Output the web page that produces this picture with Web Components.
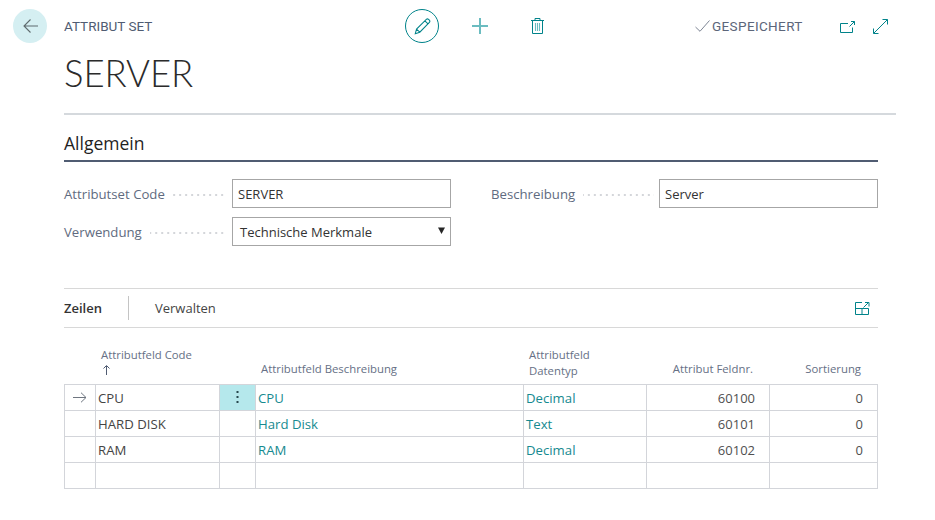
<!DOCTYPE html>
<html lang="de">
<head>
<meta charset="utf-8">
<title>Attribut Set</title>
<style>
	html, body { margin: 0; background: #fff; }
	body { font: 13px "Open Sans", "Noto Sans", sans-serif; color: #333; width: 935px; height: 520px; overflow: hidden; }
</style>
</head>
<body>
<bc-page>
	<bc-header slot="header" caption="ATTRIBUT SET" name="SERVER"></bc-header>
	<bc-section caption="Allgemein">
		<bc-field slot="left" label="Attributset Code" value="SERVER"></bc-field>
		<bc-field slot="left" label="Verwendung" value="Technische Merkmale" select></bc-field>
		<bc-field slot="right" label="Beschreibung" value="Server"></bc-field>
	</bc-section>
	<bc-lines></bc-lines>
</bc-page>

<script>
const teal = "#00838a";

/**
 * Page frame, keeps the vertical rhythm of the card.
 */
class BcPage extends HTMLElement {
	constructor () {
		super();
		this.attachShadow({mode: "open"}).innerHTML = `
			<style>
				:host { display: flex; flex-direction: column; }
				.body { padding: 0 57px 0 64px; display: flex; flex-direction: column; }
			</style>
			<slot name="header"></slot>
			<div class="body"><slot></slot></div>
		`;
	}
}

/**
 * Top bar with back button, actions and the record title.
 */
class BcHeader extends HTMLElement {
	constructor () {
		super();
		const caption = this.getAttribute("caption");
		const name = this.getAttribute("name");
		this.attachShadow({mode: "open"}).innerHTML = `
			<style>
				:host { display: block; padding: 9px 39px 0 13px; }
				.bar { display: flex; align-items: center; height: 34px; }
				.back { width: 34px; height: 34px; border-radius: 50%; background: #d5eff2; display: flex; align-items: center; justify-content: center; flex: none; margin-right: 17px; }
				.caption { width: 341px; flex: none; font: 400 13.5px Roboto, sans-serif; color: #505c72; }
				.edit { border: 1.2px solid ${teal}; border-radius: 50%; display: flex; align-items: center; justify-content: center; flex: none; box-sizing: border-box; width: 34px; height: 34px; }
				.plus { margin-left: 33px; display: flex; }
				.trash { margin-left: 43px; display: flex; }
				.saved { margin-left: 151px; display: flex; align-items: center; gap: 2px; font: 400 13.5px Roboto, sans-serif; color: #5c667a; letter-spacing: .37px; }
				.open { margin-left: auto; display: flex; margin-top: 2px; }
				.full { margin-left: 18px; margin-right: 8px; display: flex; }
				h1 { margin: 6px 0 0 51px; font: 300 36.5px/48px Lato, sans-serif; color: #2b2b2b; letter-spacing: -.1px; }
				.rule { height: 2px; background: #d5d9dd; margin: 16px 0 0 51px; }
				svg { display: block; }
			</style>
			<div class="bar">
				<div class="back">
					<svg width="15" height="14" viewBox="0 0 15 14" fill="none" stroke="#5f6b6e" stroke-width="1.1"><path d="M15 7H1M7.500 .5 1 7l6.500 6.500"/></svg>
				</div>
				<div class="caption">${caption}</div>
				<div class="edit">
					<svg width="17" height="17" viewBox="0 0 20 20" fill="none" stroke="${teal}" stroke-width="1.2"><path d="M1.5 18.5 3 13 14.5 1.6c.8-.7 1.8-.7 2.6 0l1 1c.7.8.7 1.8 0 2.5L6.800 16.700zM3 13l3.800 3.700M12.800 3.300l3.700 3.700"/></svg>
				</div>
				<div class="plus">
					<svg width="16" height="16" viewBox="0 0 16 16" stroke="#6bbcc0" stroke-width="2"><path d="M8 0v16M0 8h16"/></svg>
				</div>
				<div class="trash">
					<svg width="13" height="16" viewBox="0 0 13 16" fill="none" stroke="${teal}" stroke-width="1"><path d="M0 2.500h13M1.500 2.500v13h10v-13M4 2.500V.5h5v2"/><path stroke="#6bbcc0" stroke-width="1.100" d="M4.500 5v8M6.500 5v8M8.500 5v8"/></svg>
				</div>
				<div class="saved">
					<svg width="15" height="12" viewBox="0 0 15 12" fill="none" stroke="#7d8594" stroke-width="1"><path d="M.5 7 5 11.300 14.500 .5"/></svg>
					<span>GESPEICHERT</span>
				</div>
				<div class="open">
					<svg width="15" height="12" viewBox="0 0 15 12" fill="none" stroke="${teal}" stroke-width="1"><path d="M8 2.500H.5v9h12V6.500M9.500 5.500l5-5M11 .5h3.500V4"/></svg>
				</div>
				<div class="full">
					<svg width="15" height="15" viewBox="0 0 15 15" fill="none" stroke="${teal}" stroke-width="1"><path d="M.7 14.300 14.300 .7M9.500 .5h5v5M.5 9.500v5h5"/></svg>
				</div>
			</div>
			<h1>${name}</h1>
			<div class="rule"></div>
		`;
	}
}

/**
 * FastTab with a caption and two columns of fields.
 */
class BcSection extends HTMLElement {
	constructor () {
		super();
		this.attachShadow({mode: "open"}).innerHTML = `
			<style>
				:host { display: block; margin-top: 17px; }
				h2 { margin: 0; font: 500 17.5px/22px "Open Sans", sans-serif; color: #1f1f1f; height: 28px; border-bottom: 2px solid #505c72; }
				.cols { display: grid; grid-template-columns: 387px 387px; column-gap: 40px; margin-top: 17px; height: 109px; }
				.col { display: flex; flex-direction: column; gap: 9px; }
			</style>
			<h2>${this.getAttribute("caption")}</h2>
			<div class="cols">
				<div class="col"><slot name="left"></slot></div>
				<div class="col"><slot name="right"></slot></div>
			</div>
		`;
	}
}

/**
 * Label, dotted leader and an input box.
 */
class BcField extends HTMLElement {
	constructor () {
		super();
		const isSelect = this.hasAttribute("select");
		this.attachShadow({mode: "open"}).innerHTML = `
			<style>
				:host { display: flex; align-items: center; height: 29px; }
				.label { color: #5f6b80; white-space: nowrap; font-size: 13.2px; }
				.dots { flex: 1; height: 2px; margin: 2px 5px 0 8px; background: radial-gradient(circle at 1px 1px, #d4d6da .8px, transparent 1px) right / 6px 2px repeat-x; }
				.box { flex: none; width: 219px; height: 29px; box-sizing: border-box; border: 1px solid #a6a6a6; display: flex; align-items: center; justify-content: space-between; padding: 0 5px 0 ${isSelect ? 7 : 5}px; color: #333; }
				svg { display: block; margin-bottom: 3px; }
			</style>
			<span class="label">${this.getAttribute("label")}</span>
			<span class="dots"></span>
			<div class="box">
				<span>${this.getAttribute("value")}</span>
				${isSelect ? `<svg width="7" height="7" viewBox="0 0 7 7"><path d="M0 .5h7L3.500 7z" fill="#262626"/></svg>` : ""}
			</div>
		`;
	}
}

const columns = "31px 124px 36px 268px 123px 123px 108px";

const rows = [
	{code: "CPU", desc: "CPU", type: "Decimal", no: "60100", sort: "0", current: true},
	{code: "HARD DISK", desc: "Hard Disk", type: "Text", no: "60101", sort: "0"},
	{code: "RAM", desc: "RAM", type: "Decimal", no: "60102", sort: "0"},
	{code: "", desc: "", type: "", no: "", sort: ""}
];

/**
 * Subpage with its action bar and the lines grid.
 */
class BcLines extends HTMLElement {
	constructor () {
		super();
		const body = rows.map((r) => `
			<div class="c">${r.current ? `<svg width="14" height="11" viewBox="0 0 14 11" fill="none" stroke="#6f7680" stroke-width="1"><path d="M0 5.500h13M8 .7l5 4.800-5 4.800"/></svg>` : ""}</div>
			<div class="c t">${r.code}</div>
			<div class="c dots${r.current ? " on" : ""}">${r.current ? `<svg width="3" height="13" viewBox="0 0 3 13" fill="#27474d"><rect x="0.500" width="2" height="2"/><rect x="0.500" y="5" width="2" height="2"/><rect x="0.500" y="10" width="2" height="2"/></svg>` : ""}</div>
			<div class="c t link">${r.desc}</div>
			<div class="c t link">${r.type}</div>
			<div class="c t num">${r.no}</div>
			<div class="c t num">${r.sort}</div>
		`).join("");
		this.attachShadow({mode: "open"}).innerHTML = `
			<style>
				:host { display: block; }
				.bar { height: 38px; border-top: 1px solid #d8d8d8; border-bottom: 1px solid #d8d8d8; display: flex; align-items: center; }
				.tab { font-weight: 600; color: #333; font-size: 13px; }
				.sep { width: 1px; height: 24px; background: #c4c4c4; margin: 0 26px 0 26px; }
				.action { color: #444; font-size: 13px; flex: 1; }
				.exp { margin-right: 8px; display: block; }
				.grid { display: grid; grid-template-columns: ${columns}; width: 814px; }
				.h { height: 56px; box-sizing: border-box; font-size: 11.35px; line-height: 16px; color: #667085; display: flex; align-items: flex-end; padding: 0 0 7px 6px; }
				.h.two { padding-bottom: 5px; }
				.h.r { justify-content: flex-end; padding: 0 16px 7px 0; }
				.h.code { grid-column: 1 / span 3; padding-left: 37px; }
				.h svg { margin: 2px 0 2px 2px; }
				.body { display: grid; grid-template-columns: ${columns}; width: 814px; box-sizing: border-box; border-top: 1px solid #d3d5da; border-left: 1px solid #d3d5da; }
				.c { height: 26px; box-sizing: border-box; border-right: 1px solid #d3d5da; border-bottom: 1px solid #d3d5da; display: flex; align-items: center; justify-content: center; }
				.t { justify-content: flex-start; padding-left: 2px; white-space: nowrap; color: #444; font-size: 13.2px; }
				.link { color: #168a90; }
				.num { justify-content: flex-end; padding: 0 14px 0 0; color: #505050; font-size: 13px; }
				.on { background: #b5e8ec; }
				svg { display: block; }
			</style>
			<div class="bar">
				<span class="tab">Zeilen</span>
				<span class="sep"></span>
				<span class="action">Verwalten</span>
				<svg class="exp" width="15" height="13" viewBox="0 0 15 13" fill="none" stroke="${teal}" stroke-width="1"><path d="M7 .5H.5v12h13V6.500H.5M7 6.500v6M8.500 5.500l5-5M10 .5h4v4"/></svg>
			</div>
			<div class="grid">
				<div class="h code"><div>Attributfeld Code<svg width="7" height="10" viewBox="0 0 7 10" fill="none" stroke="#505c72" stroke-width="1"><path d="M3.500 10V1M.5 3.500l3-3 3 3"/></svg></div></div>
				<div class="h">Attributfeld Beschreibung</div>
				<div class="h two"><div>Attributfeld<br>Datentyp</div></div>
				<div class="h r">Attribut Feldnr.</div>
				<div class="h r">Sortierung</div>
			</div>
			<div class="body">${body}</div>
		`;
	}
}

window.customElements.define("bc-page", BcPage);
window.customElements.define("bc-header", BcHeader);
window.customElements.define("bc-section", BcSection);
window.customElements.define("bc-field", BcField);
window.customElements.define("bc-lines", BcLines);
</script>
</body>
</html>
